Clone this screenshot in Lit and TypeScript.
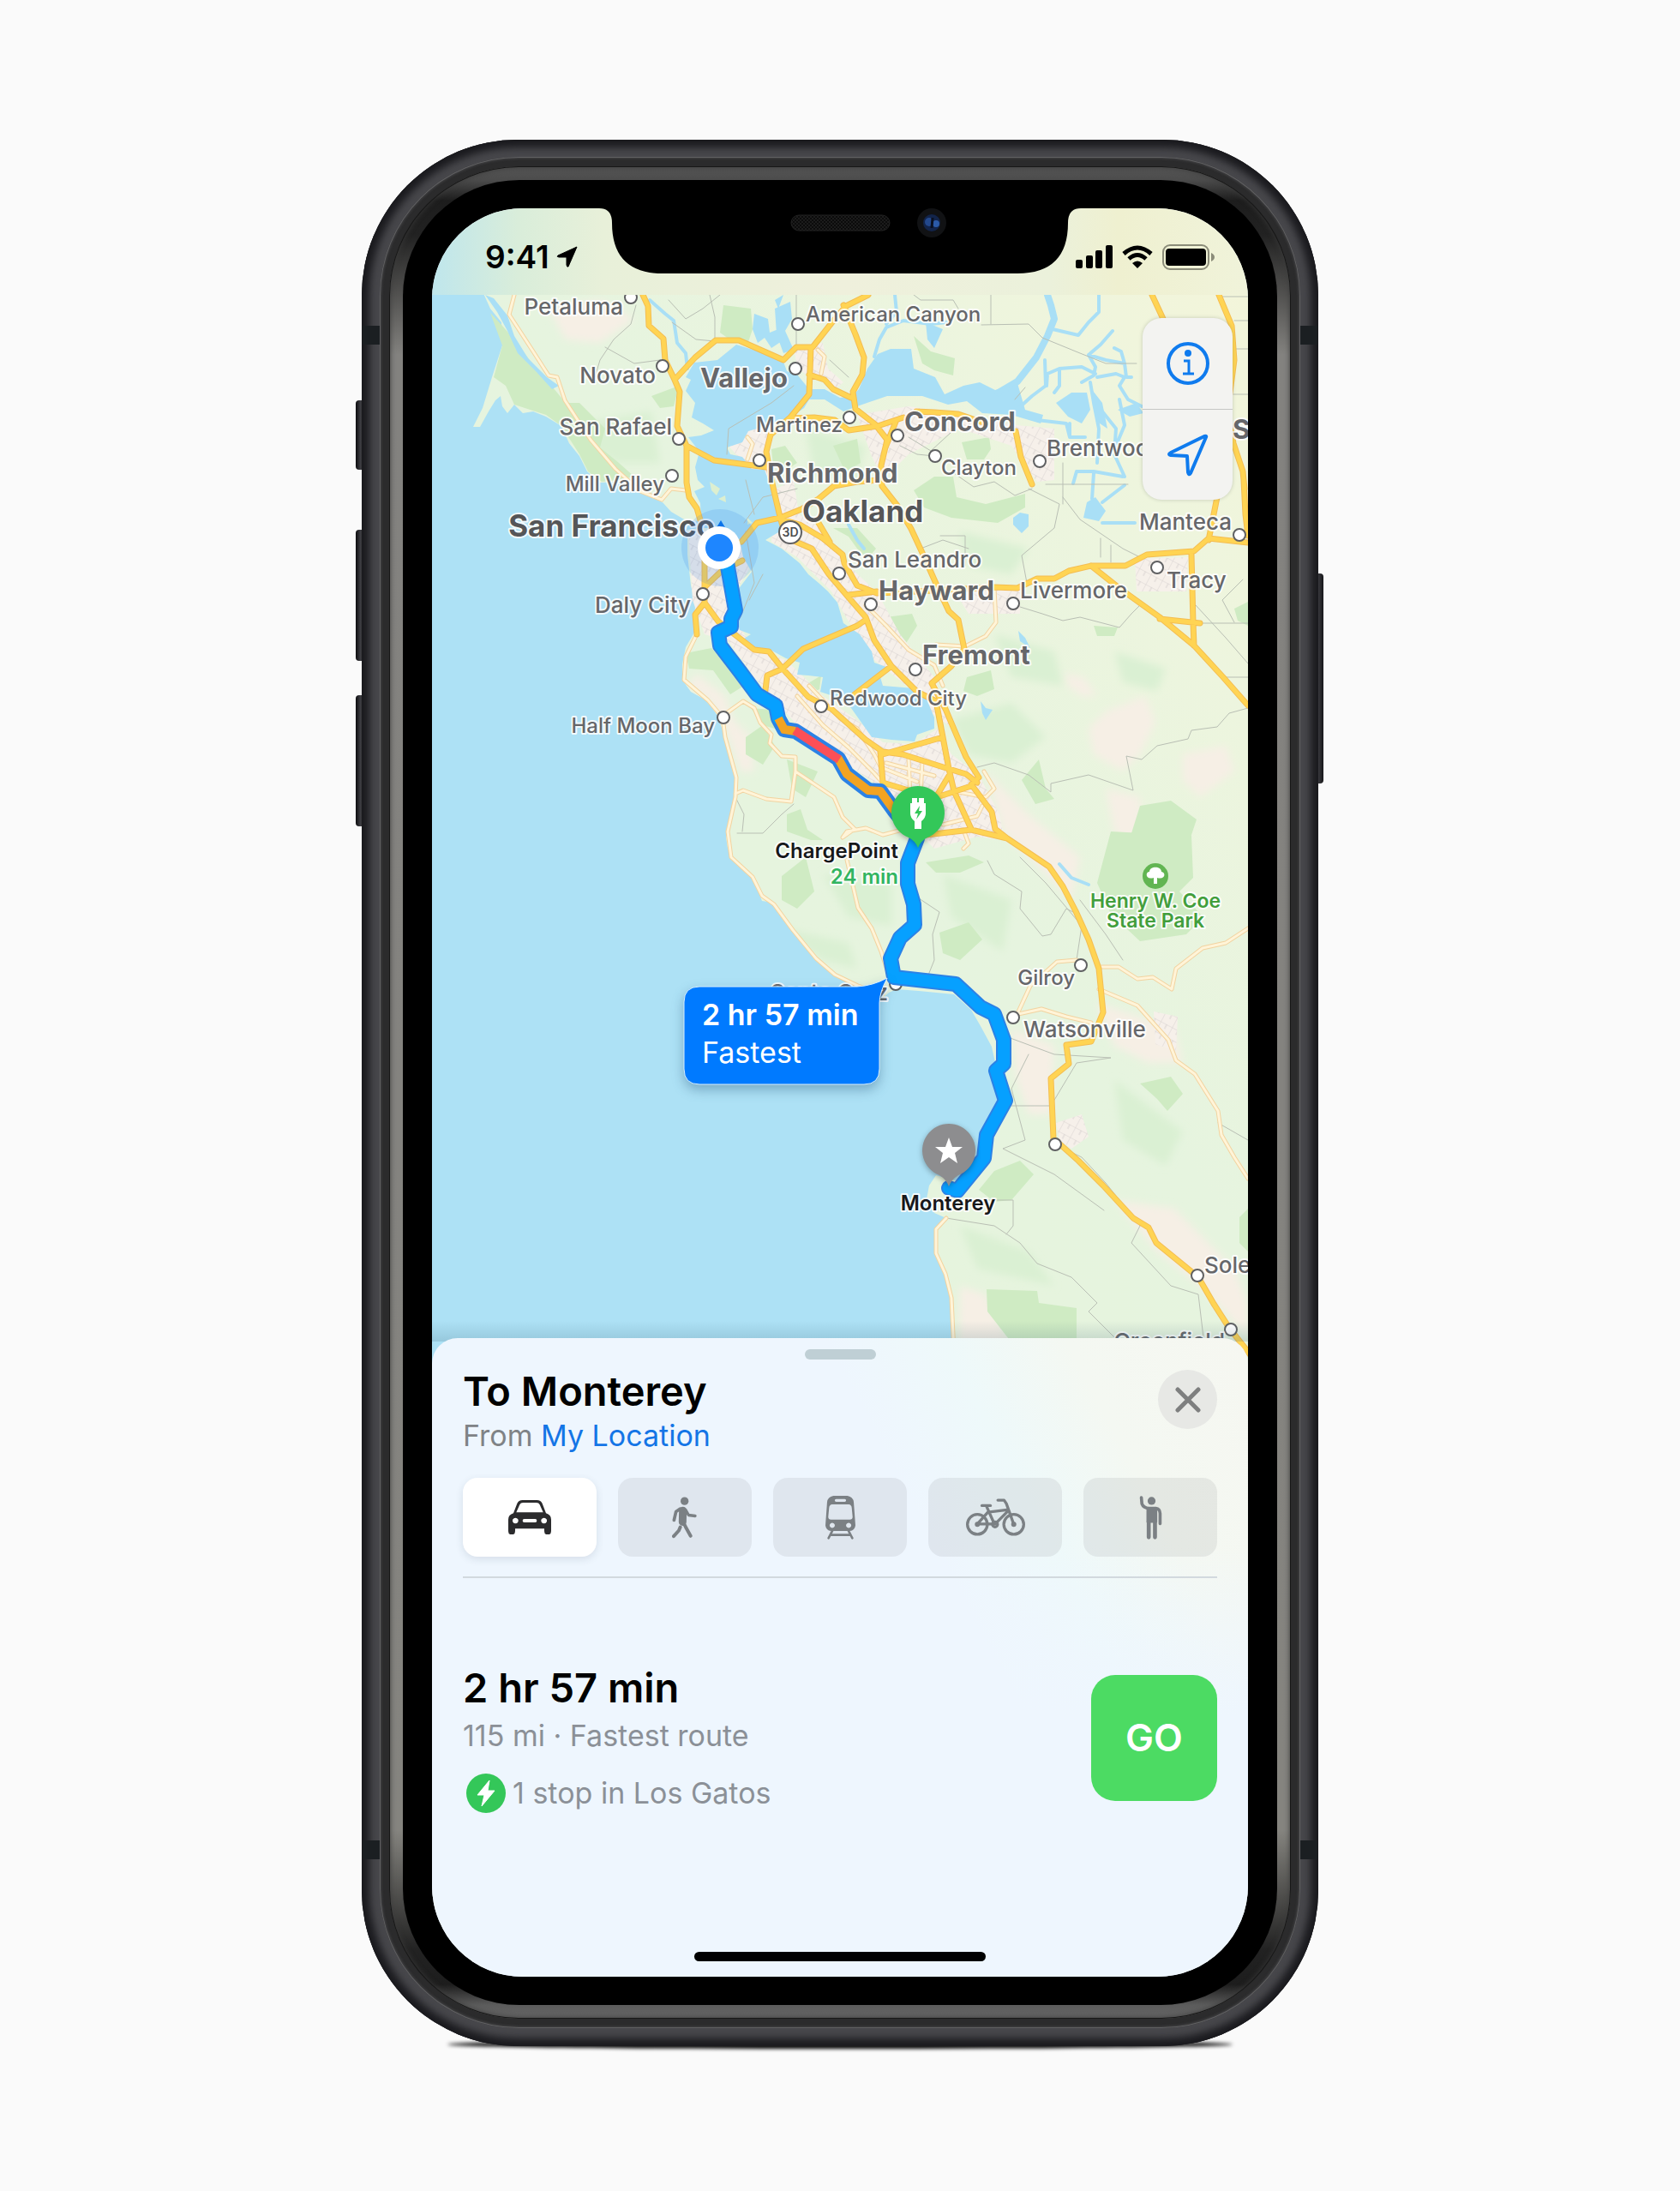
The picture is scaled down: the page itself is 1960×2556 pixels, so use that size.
import { LitElement, html, svg, css } from "lit";
import { customElement, state } from "lit/decorators.js";

type Place = {
  name: string;
  x: number;
  y: number;
  kind?: "village" | "town" | "major" | "metro";
  end?: boolean;
};

const PLACES: Place[] = [
  { name: "Petaluma", x: 727, y: 367, end: true, kind: "town" },
  { name: "American Canyon", x: 940, y: 375 },
  { name: "Novato", x: 765, y: 447, end: true, kind: "town" },
  { name: "Vallejo", x: 919, y: 452, kind: "major", end: true },
  { name: "San Rafael", x: 784, y: 507, end: true, kind: "town" },
  { name: "Martinez", x: 983, y: 504, end: true },
  { name: "Concord", x: 1055, y: 503, kind: "major" },
  { name: "Clayton", x: 1098, y: 554 },
  { name: "Brentwood", x: 1221, y: 532, kind: "town" },
  { name: "Richmond", x: 895, y: 563, kind: "major" },
  { name: "Mill Valley", x: 775, y: 573, end: true },
  { name: "San Francisco", x: 834, y: 626, kind: "metro", end: true },
  { name: "Oakland", x: 936, y: 609, kind: "metro" },
  { name: "Stockton", x: 1438, y: 512, kind: "major" },
  { name: "Manteca", x: 1437, y: 618, end: true, kind: "town" },
  { name: "San Leandro", x: 989, y: 662, kind: "town" },
  { name: "Hayward", x: 1025, y: 700, kind: "major" },
  { name: "Livermore", x: 1190, y: 698, kind: "town" },
  { name: "Tracy", x: 1361, y: 686, kind: "town" },
  { name: "Fremont", x: 1076, y: 775, kind: "major" },
  { name: "Redwood City", x: 968, y: 823 },
  { name: "Daly City", x: 806, y: 715, end: true, kind: "town" },
  { name: "Half Moon Bay", x: 834, y: 855, end: true },
  { name: "Gilroy", x: 1254, y: 1149, end: true },
  { name: "Watsonville", x: 1194, y: 1210, kind: "town" },
  { name: "Soledad", x: 1405, y: 1485, kind: "town" },
  { name: "Greenfield", x: 1429, y: 1574, end: true, kind: "town" },
  { name: "Santa Cruz", x: 1036, y: 1167, end: true, kind: "town" },
];

const DOTS: [number, number][] = [
  [736, 347], [931, 378], [773, 427], [928, 430], [792, 512], [991, 487],
  [1047, 508], [1091, 532], [1213, 538], [886, 537], [784, 555], [1446, 624],
  [979, 669], [1016, 705], [1182, 704], [1350, 662], [1068, 781], [958, 824],
  [820, 693], [844, 837], [1261, 1126], [1182, 1187], [1231, 1335],
  [1397, 1488], [1436, 1551], [1045, 1148],
];

const COAST =
  "M563 340 L572 360 585 376 586 403 574 440 563 476 552 498 560 498 570 480 578 467 584 462 586 474 592 482 600 472 610 482 622 480 637 486 655 497 664 517 676 532 685 550 700 563 722 562 735 572 747 575 773 586 783 597 800 607 818 608 818 616 802 618 802 647 806 683 811 705 810 738 800 755 796 775 796 793 806 807 826 818 837 835 846 860 852 885 859 907 858 937 852 960 847 977 849 990 860 1007 878 1023 889 1051 903 1053 925 1083 952 1118 974 1136 1001 1150 1028 1166 1037 1158 1046 1154 1072 1156 1113 1160 1133 1178 1144 1197 1157 1221 1164 1253 1173 1284 1162 1308 1148 1336 1140 1352 1117 1378 1092 1371 1084 1383 1081 1399 1090 1415 1104 1421 1092 1434 1092 1462 1103 1486 1110 1514 1113 1600 L1470 1600 1470 340Z";

const BAY =
  "M818 608 L817 587 810 573 822 568 814 560 811 545 816 527 803 510 818 508 833 502 820 494 807 487 811 470 800 456 806 443 800 440 810 423 837 420 859 402 885 410 914 422 918 433 930 437 944 454 962 454 980 464 994 462 1002 454 1012 430 1024 413 1039 407 1063 407 1066 430 1091 440 1102 460 1124 450 1143 446 1161 455 1187 447 1196 478 1217 484 1214 494 1180 484 1146 482 1128 468 1106 472 1076 462 1035 462 1000 474 984 480 962 466 944 466 938 476 922 487 905 492 890 498 873 503 866 516 848 522 852 530 866 533 877 547 892 548 897 562 902 575 907 603 913 618 893 630 912 640 933 657 943 670 955 680 966 690 977 703 984 727 1003 740 1017 760 1020 773 1037 779 1027 790 1030 800 1067 803 1080 813 1090 837 1090 850 1070 857 1067 865 1040 863 1017 860 1010 850 993 826 975 813 957 807 960 790 943 788 930 787 933 773 917 768 897 757 880 757 868 745 876 740 863 735 857 715 864 708 857 693 867 680 877 667 867 650 863 630 850 616 818 616Z";

const WATER = [
  "M566 344 L576 348 592 368 600 392 616 418 638 440 652 450 644 454 626 434 604 412 592 386 580 364Z",
  "M880 366 L896 372 898 388 908 384 912 398 900 406 892 394 884 400 878 384Z",
  "M904 360 L922 352 924 372 916 386 926 408 914 412 906 390Z",
  "M904 350 L914 344 908 360Z",
  "M1232 470 L1250 458 1268 458 1272 478 1262 494 1246 486Z",
  "M1272 452 L1286 470 1292 500 1280 492Z",
  "M1304 478 L1326 470 1334 482 1318 486Z",
  "M1268 586 L1278 580 1290 596 1282 608 1264 604Z",
  "M1182 604 L1190 598 1200 600 1200 614 1192 622 1182 612Z",
  "M1144 818 L1150 826 1158 828 1150 840 1146 832Z",
  "M1188 736 L1196 744 1202 756 1190 748Z",
  "M1080 376 L1100 384 1090 406 1082 396Z",
];

const RIVERS = [
  "M1165 458 L1187 445 1209 417 1222 392 1230 372 1226 356 1222 344",
  "M1228 384 L1258 391 1270 376 1282 364 1282 344",
  "M1020 416 L1026 396 1034 382 1054 374 1086 378 1104 376",
  "M1044 344 L1046 364 1034 378",
  "M758 350 L776 366 786 374 790 400 800 412 802 430",
  "M1182 482 L1204 462 1220 450 1219 420",
  "M1221 450 L1222 436 1236 430 1262 428 1278 436",
  "M1236 432 L1236 450 1230 458",
  "M1262 446 L1276 438 1278 428 1270 414 1284 402 1298 386",
  "M1270 414 L1290 420 1312 424 1314 440 1320 440",
  "M1312 424 L1308 410 1300 406",
  "M1280 440 L1302 436 1312 440 1306 450 1316 466 1332 474",
  "M1272 446 L1276 470 1282 500 1280 540",
  "M1210 490 L1244 494 1248 510 1266 510",
  "M1248 494 L1248 510",
  "M1286 480 L1302 500 1300 530 1312 556",
  "M1306 466 L1312 496 1302 520",
  "M1252 564 L1256 550 1276 550 1310 556",
  "M1312 566 L1286 586 M1276 552 L1274 582",
  "M1286 610 L1324 610",
  "M990 612 L1000 630 1008 640",
  "M1236 1008 L1250 1024 1270 1032",
];

const PARKS = [
  "M572 365 L586 380 600 396 618 420 640 446 660 470 676 470 706 500 700 522 722 540 740 556 720 560 702 562 686 550 676 530 655 497 637 484 600 472 590 450 576 440 586 403Z",
  "M844 356 L876 360 878 384 872 402 854 398 840 388Z",
  "M760 462 L792 450 786 474 770 476Z",
  "M1066 392 L1086 410 1114 418 1112 438 1090 432 1076 424Z",
  "M1066 572 L1090 556 1112 556 1116 580 1150 588 1196 576 1196 592 1164 610 1110 604 1078 592Z",
  "M1122 516 L1154 510 1156 524 1148 536 1128 536Z",
  "M972 520 L1000 512 1004 540 986 550Z",
  "M900 524 L916 520 930 540 918 548 902 542Z",
  "M972 616 L1000 616 1022 640 1012 652 1000 640 990 626Z",
  "M1012 712 L1034 720 1064 716 1070 730 1056 752 1040 738Z",
  "M800 762 L830 756 850 778 868 800 852 810 832 782 804 780Z",
  "M1128 790 L1156 782 1160 804 1140 812 1124 806Z",
  "M870 860 L890 846 904 870 890 892 870 880Z",
  "M876 826 L900 828 904 850 890 846Z",
  "M918 886 L954 900 940 930 924 920Z",
  "M918 950 L934 944 942 968 960 980 946 980 918 970Z",
  "M1192 910 L1212 886 1220 920 1230 932 1208 938Z",
  "M1330 940 L1366 934 1396 956 1388 980 1350 990 1320 972Z",
  "M1296 970 L1390 975 1392 1024 1376 1040 1404 1070 1384 1090 1330 1098 1296 1066 1280 1030Z",
  "M912 1022 L940 1000 950 1040 930 1060 912 1050Z",
  "M1096 1088 L1130 1076 1146 1096 1120 1120 1100 1112Z",
  "M1080 1006 L1130 998 1148 1006 1120 1018 1092 1018Z",
  "M1330 1264 L1366 1256 1380 1276 1362 1296 1350 1282Z",
  "M1160 1366 L1190 1354 1206 1370 1180 1400 1160 1402 1142 1388Z",
  "M1151 1504 L1210 1506 1212 1520 1256 1526 1256 1600 1180 1600 1180 1566 1152 1530Z",
  "M1446 1420 L1456 1410 1456 1460 1446 1450Z",
  "M938 800 L958 788 956 804 944 810Z",
  "M830 688 L842 684 846 704 834 700Z",
  "M1276 730 L1304 732 1300 742 1280 742Z",
  "M1440 710 L1456 702 1456 730 1444 724Z",
];

const SAND = [
  "M640 360 L700 350 740 372 700 400 660 396Z",
  "M1240 785 L1264 790 1280 812 1262 812 1246 800Z",
  "M1290 830 L1336 812 1348 842 1330 880 1310 900 1276 880 1270 850Z",
  "M1290 920 L1330 930 1332 970 1320 990 1300 970Z",
  "M1150 900 L1200 950 1260 1000 1250 1050 1200 1000 1170 970Z",
  "M812 786 L846 812 856 840 876 860 880 900 864 900 846 850 830 820 802 800Z",
  "M1180 1200 L1230 1220 1226 1300 1200 1300 1186 1260Z",
  "M1280 1170 L1370 1200 1380 1240 1340 1240 1300 1220Z",
  "M1300 1400 L1370 1410 1440 1480 1456 1520 1456 1560 1400 1500 1350 1460Z",
  "M1120 1500 L1150 1510 1180 1570 1150 1600 1118 1600Z",
  "M1380 880 L1430 870 1440 900 1400 930 1380 910Z",
];

const MEADOW = [
  "M1110 840 L1180 820 1220 860 1180 890 1130 880Z",
  "M1160 740 L1230 760 1240 800 1180 790Z",
  "M1300 760 L1360 780 1350 806 1310 796Z",
  "M900 1080 L990 1100 1000 1130 960 1120Z",
  "M960 1020 L1040 1030 1040 1080 990 1070Z",
  "M1100 1020 L1180 1050 1170 1110 1110 1070Z",
  "M1300 1260 L1380 1320 1360 1360 1310 1330Z",
  "M1120 1430 L1200 1460 1230 1500 1140 1480Z",
  "M940 500 L1010 520 1000 560 950 556Z",
  "M640 500 L760 480 770 540 720 540Z",
  "M1120 620 L1200 640 1180 670 1130 660Z",
];

const URBAN = [
  "M803 620 L850 617 866 640 874 664 858 690 862 730 880 757 917 770 940 792 960 812 1000 840 1030 866 1066 868 1094 850 1110 880 1142 904 1166 950 1172 980 1140 976 1090 990 1060 960 1030 920 980 886 930 846 880 790 850 748 822 740 808 700Z",
  "M906 570 L926 560 932 600 960 618 990 660 1024 692 1050 740 1090 790 1112 850 1084 830 1060 802 1020 770 990 725 970 690 930 650 900 632Z",
  "M1000 484 L1060 474 1110 482 1186 496 1230 500 1230 560 1210 562 1180 520 1120 500 1060 530 1030 560 1016 530Z",
  "M850 520 L876 500 896 500 900 560 872 546Z",
  "M926 404 L960 400 966 430 984 446 976 452 946 440 930 430Z",
  "M1140 686 L1190 684 1190 716 1130 716 1120 700Z",
  "M1324 652 L1386 650 1384 690 1326 690Z",
  "M1232 1310 L1262 1300 1270 1326 1250 1340 1236 1330Z",
  "M1346 1180 L1374 1186 1372 1226 1348 1218Z",
];

const HIGHWAYS = [
  "M750 344 L756 357 757 380 774 395 776 420 787 443 793 457 790 497 801 520 801 563 804 580 813 593 818 610",
  "M787 443 L811 417 835 397 862 397 914 420 929 405 948 405 970 377 987 357 1013 344",
  "M946 405 L944 460 922 487 899 507 894 527 898 550 903 573 910 603",
  "M801 520 L833 537 894 545",
  "M944 437 L962 443 972 454 993 464",
  "M984 356 L998 390 1008 417 1006 437 995 457 998 477 1021 495 1035 513 1028 543 1029 567 1047 590 1063 617 1077 647 1093 683 1107 713 1118 723 1125 757 1110 777 1087 797 1103 827 1117 860 1127 883 1142 907 1133 915 1157 947 1161 967 1175 978",
  "M922 488 L950 487 974 490 990 502 1024 497 1054 487",
  "M1045 492 L1033 522",
  "M1069 480 L1090 481 1118 483 1150 494",
  "M1185 503 L1191 533 1204 565",
  "M865 632 L883 610 910 604 935 594 955 582 973 567 1000 562 1026 560",
  "M910 603 L917 627 947 640 967 670 990 697 1010 720 1020 747 1040 777 1070 807 1092 818 1100 860 1107 897 1113 923 1133 967",
  "M912 606 L933 612 960 628 983 647 985 657 1000 683 1023 692 1070 690 1160 685 1187 686 1210 675 1230 675 1247 666 1273 660 1313 660 1338 647 1393 643 1410 628 1456 633",
  "M955 610 L968 632",
  "M990 694 L1023 690",
  "M893 805 L895 788 913 780 937 757 1000 730 1010 723",
  "M997 810 L1040 777",
  "M1273 660 L1307 687 1353 720 1393 753 1427 790 1456 823",
  "M1390 647 L1392 727 1393 753",
  "M1353 722 L1400 727",
  "M1420 580 L1410 630",
  "M1451 560 L1453 600 1456 625",
  "M1344 344 L1357 372 1370 410",
  "M1422 344 L1437 380 1440 420 1432 480 1439 517 1450 550 1452 570",
  "M822 703 L838 725 857 740 880 758 897 760 913 780 943 813 970 827 1010 863 1030 877 1053 880 1107 897 1127 903 1140 913",
  "M813 740 L811 717 822 703 822 650",
  "M822 685 L843 665 866 654",
  "M1027 877 L1030 913 1060 922 1093 930 1133 917",
  "M1030 880 L1100 860",
  "M1093 928 L1107 905",
  "M1080 974 L1133 968 1175 978 1224 1011 1240 1034 1255 1063 1270 1096 1282 1130 1287 1181 1273 1215 1244 1219 1247 1241 1226 1258 1229 1328 1258 1354 1287 1383 1322 1421 1340 1432 1349 1450 1398 1490 1416 1521 1434 1549 1456 1577 1468 1594",
];

const ROADS = [
  "M600 344 L594 367 622 410 640 438 650 440 659 467 689 513 718 547 747 573 772 583 783 570 800 572",
  "M813 740 L800 766 798 793 826 817 843 837 846 860 859 907 858 930 849 970 853 1000 878 1023 889 1045 903 1055 925 1085 952 1118 974 1137 1001 1150 1030 1160",
  "M846 833 L867 818 880 826 887 843 900 857 898 867 912 882 928 883 928 900 923 935 894 932 867 922 858 926",
  "M928 900 L973 930 983 953 997 967 983 977 988 970 1010 966 1030 974 1060 966",
  "M988 1003 L1001 1059 1017 1083 1028 1110 1037 1138",
  "M944 800 L980 838 1000 850 1020 880 1030 900",
  "M930 812 L960 846 990 872 1020 902 1034 918",
  "M1034 890 L1090 905 M1030 896 L1070 912 M1060 884 L1062 930 M1076 888 L1074 930",
  "M1010 706 L1034 730 1060 758 1090 776 1100 800",
  "M1160 686 L1162 726 1150 742 1126 754 1092 752",
  "M1113 923 L1150 930 1160 920 1148 900",
  "M1124 968 L1130 984 1124 990 M1100 962 L1140 952 1146 940",
  "M1184 1189 L1202 1150 1233 1122 1256 1120",
  "M1188 1183 L1215 1177 1244 1186 1273 1193",
  "M1282 1128 L1305 1128 1327 1142 1345 1140 1367 1154 1372 1130 1403 1106 1430 1100 1456 1083",
  "M1282 1154 L1327 1173 1363 1213 1372 1237 1394 1253 1421 1296 1425 1324 1440 1350 1456 1375",
  "M1104 1421 L1092 1434 1092 1462 1103 1486 1110 1514 1114 1600",
  "M872 510 L878 518 872 536",
  "M954 408 L962 416 958 436",
];

const BOUNDS = [
  "M742 356 L736 378 716 396 700 420 694 440",
  "M706 405 L740 424 770 420",
  "M780 350 L800 372 820 360 840 344",
  "M784 376 L812 396 834 398",
  "M828 344 L834 370 834 394",
  "M1156 344 V378 M1066 344 L1074 350 1112 350 1118 360",
  "M1145 379 L1200 378 1216 394 1260 412 1290 424 1326 424",
  "M1425 346 H1456 M1439 407 H1456 M1439 460 H1456 M1440 374 H1456",
  "M929 344 V370 M929 386 V404",
  "M848 530 L850 500 900 470 926 450",
  "M968 420 L990 440 M1184 466 L1196 452",
  "M1110 550 L1136 568 1160 562 1184 578 1204 570",
  "M1200 570 L1236 588 1230 616 1192 648 1198 680",
  "M1220 565 H1316 M1240 540 V588",
  "M1240 580 L1260 606 1310 640 1330 650",
  "M1284 628 V650 M1296 636 V656",
  "M1190 708 L1216 716 1240 724 1260 720 1306 732 1320 716 1330 706",
  "M1395 706 L1430 744 1456 774",
  "M1450 676 L1426 700 1440 726 M1400 727 H1456 M1427 790 H1456",
  "M1140 895 L1160 890 1200 904 1226 924 1226 914 1270 904 1322 922 1314 882 1332 886 1350 870 1386 862 1390 852 1420 848 1434 832 1456 826",
  "M1074 640 L1100 630 1130 640 M1097 625 H1126 V660",
  "M858 930 L868 950 866 970 M860 972 L890 972 912 950 926 938",
  "M1152 1004 L1160 1020 1192 1040 1190 1060 1216 1092 1226 1090 1244 1060 1256 1066",
  "M1060 1040 L1096 1064 1088 1090 1090 1120 1082 1140",
  "M1256 1120 L1262 1080 1220 1030 1190 1000",
  "M1310 1120 L1290 1090 1260 1050",
  "M1176 1210 L1230 1230 1296 1234 1256 1240 1226 1290 1180 1290",
  "M1200 1230 L1180 1270 1196 1330 1170 1340 1230 1370 1288 1412",
  "M1104 1421 L1160 1430 1190 1450 1210 1474 1250 1490 1280 1520 1270 1530 1300 1560",
  "M1152 1400 L1182 1400 1182 1430 1174 1440",
  "M1231 1335 L1262 1350 1290 1380 1330 1430 1320 1450 1366 1500 1398 1510 1404 1560",
  "M1421 1310 L1456 1330",
  "M870 560 L880 600 M868 610 L890 580 930 570",
  "M874 700 L890 670 M870 620 L880 680 864 720",
  "M1050 520 L1070 530 1090 532 M1060 510 L1086 526 1110 504",
];

const ROUTE_A = "M847 650 L858 712 853 722 853 731 838 738 840 753 863 783 883 810 905 823 908 838";
const ROUTE_TRAFFIC = "M908 838 L915 851 928 853 978 885 988 903 1013 922 1027 923 1043 945 1060 966";
const ROUTE_B =
  "M1070 978 L1059 1007 1059 1031 1066 1055 1067 1079 1050 1094 1039 1118 1043 1140 1115 1148 1144 1175 1160 1183 1171 1213 1171 1241 1162 1249 1173 1284 1151 1324 1148 1351 1117 1389 1107 1386";

@customElement("route-map")
class RouteMap extends LitElement {
  static styles = css`
    :host {
      display: block;
    }
    .map {
      display: block;
      width: 100%;
      height: auto;
      font-family: Inter, "Liberation Sans", sans-serif;
    }
    .line {
      fill: none;
      stroke-linejoin: round;
      stroke-linecap: round;
    }
    .label {
      fill: #66676a;
      stroke: rgba(255, 255, 255, 0.85);
      stroke-width: 4px;
      stroke-linejoin: round;
      paint-order: stroke;
      font-size: 24px;
      font-weight: 500;
    }
    .town {
      font-size: 26px;
    }
    .major {
      font-size: 31px;
      font-weight: 700;
    }
    .metro {
      font-size: 35px;
      font-weight: 700;
      fill: #555658;
    }
    .stop {
      fill: #17181a;
      font-weight: 600;
    }
    .wait {
      fill: #32b561;
      font-weight: 600;
    }
    .park {
      fill: #429e3c;
      font-weight: 600;
    }
    .park-name {
      font-size: 23px;
    }
    .badge {
      font-size: 14px;
      font-weight: 600;
      fill: #4c4d50;
    }
    .bubble {
      filter: drop-shadow(0 6px 7px rgba(20, 70, 110, 0.35));
    }
    .pin {
      filter: drop-shadow(0 2px 3px rgba(0, 0, 0, 0.3));
    }
    .eta {
      fill: #fff;
      font-size: 34px;
      font-weight: 600;
    }
    .eta-note {
      fill: #fff;
      font-size: 34px;
      font-weight: 400;
    }
  `;

  private lines(paths: string[], color: string, width: number) {
    return svg`<path class="line" d=${paths.join(" ")} stroke=${color} stroke-width=${width} />`;
  }

  render() {
    return html`
      <svg class="map" viewBox="504 344 952 1247" role="img" aria-label="Route from San Francisco to Monterey">
        <defs>
          <linearGradient id="land" x1="0" y1="1" x2="1" y2="0">
            <stop offset="0" stop-color="#e6f4db" />
            <stop offset="0.55" stop-color="#e6f4df" />
            <stop offset="0.8" stop-color="#edf5de" />
            <stop offset="1" stop-color="#f3f5da" />
          </linearGradient>
          <clipPath id="shore"><path d=${COAST} /></clipPath>
          <filter id="soften" x="-5%" y="-5%" width="110%" height="110%">
            <feGaussianBlur stdDeviation="5" />
          </filter>
          <pattern id="streets" width="15" height="13" patternUnits="userSpaceOnUse" patternTransform="rotate(28)">
            <path d="M0 0 H15 M0 0 V13 M8 0 V6" fill="none" stroke="#d9d3d1" stroke-width="1" />
          </pattern>
          <linearGradient id="lift" x1="0" y1="0" x2="0" y2="1">
            <stop offset="0" stop-color="#3c6478" stop-opacity="0" />
            <stop offset="1" stop-color="#3c6478" stop-opacity="0.2" />
          </linearGradient>
        </defs>
        <rect x="504" y="344" width="952" height="1250" fill="#ade1f5" />
        <path d=${COAST} fill="url(#land)" />
        <g clip-path="url(#shore)">
          <path d=${SAND.join(" ")} fill="#f6efe5" filter="url(#soften)" />
          <path d=${MEADOW.join(" ")} fill="#daf0d3" filter="url(#soften)" />
        </g>
        <path d=${PARKS.join(" ")} fill="#cfebc3" />
        <path d=${URBAN.join(" ")} fill="#f6f0ea" />
        <path d=${URBAN.join(" ")} fill="url(#streets)" />
        <path d=${BAY} fill="#a9dff6" />
        <path d="M828 562 L840 570 836 578 830 572Z M838 582 L846 578 847 586Z M872 604 L878 610 872 612Z" fill="#dcefd0" />
        <path d=${WATER.join(" ")} fill="#a9dff6" />
        ${this.lines(RIVERS.slice(0, 1), "#a9dff6", 8)} ${this.lines(RIVERS, "#a9dff6", 4)}
        ${this.lines(BOUNDS, "#b9bfb4", 1)}
        ${this.lines(ROADS, "#f2d3a0", 5)} ${this.lines(ROADS, "#fff4d8", 3)}
        ${this.lines(HIGHWAYS, "#f4bd52", 7)} ${this.lines(HIGHWAYS, "#ffd453", 5)}

        ${DOTS.map(
          ([x, y]) => svg`<circle cx=${x} cy=${y} r="7" fill="#fff" stroke="#5f6062" stroke-width="2" />`,
        )}
        <circle cx="922" cy="621" r="13" fill="#fff" stroke="#5f6062" stroke-width="2" />
        <text class="badge" x="922" y="626" text-anchor="middle">3D</text>

        ${PLACES.map(
          (p) => svg`<text class="label ${p.kind ?? "village"}" x=${p.x} y=${p.y}
            text-anchor=${p.end ? "end" : "start"}>${p.name}</text>`,
        )}
        <circle cx="1348" cy="1022" r="15" fill="#62b552" />
        <path d="M1346 1031 V1024 C1336 1027 1336 1017 1341 1017 C1341 1010 1355 1010 1355 1017 C1361 1018 1359 1027 1350 1024 V1031Z" fill="#fff" />
        <text class="label park park-name" x="1348" y="1059" text-anchor="middle">Henry W. Coe</text>
        <text class="label park park-name" x="1348" y="1082" text-anchor="middle">State Park</text>

        <circle cx="840" cy="639" r="45" fill="#2a7fe6" opacity="0.16" />
        ${this.lines([ROUTE_A, ROUTE_TRAFFIC, ROUTE_B], "#2b82e6", 18)}
        ${this.lines([ROUTE_A, ROUTE_B], "#06a0ff", 14)}
        <path d="M908 838 L915 851 928 853" stroke="#f3a322" stroke-width="10" fill="none" />
        <path class="line" d="M978 885 L988 903 1013 922 1027 923 1043 945 1060 966" stroke="#f3a322" stroke-width="10" />
        <path d="M927 852 L979 886" stroke="#fc4f57" stroke-width="10" fill="none" />

        <path d="M841 607 L850 622 H832Z" fill="#0a73ea" />
        <circle cx="839" cy="639" r="25" fill="#fff" />
        <circle cx="839" cy="639" r="16" fill="#1e86ff" />

        <path class="pin" d="M1060 977 A31 31 0 1 1 1082 977 Q1074 981 1071 989 Q1068 981 1060 977Z" fill="#33c759" />
        <path d="M1064 931 h6 v5 h2 v-5 h6 v6 h2 v12 q0 5 -5 9 v9 h-8 v-9 q-5 -4 -5 -9 v-12 h2z" fill="#fff" />
        <path d="M1073 940 l-6 9 h4 l-2 7 7 -10 h-4z" fill="#33c759" />

        <path class="pin" d="M1096 1371 A31 31 0 1 1 1118 1371 Q1110 1376 1107 1384 Q1104 1376 1096 1371Z" fill="#8d8d8f" />
        <path d="M1107 1327 l4 11 h12 l-9 7 3 12 -10 -7 -10 7 3 -12 -9 -7 h12z" fill="#fff" />
        <text class="label stop" x="1106" y="1412" text-anchor="middle">Monterey</text>
        <text class="label stop" x="1048" y="1001" text-anchor="end">ChargePoint</text>
        <text class="label wait" x="1048" y="1031" text-anchor="end">24 min</text>

        <path class="bubble" stroke="#d9efff" stroke-width="1"
          d="M816 1151 H1000 Q1018 1150 1035 1141 Q1026 1158 1026 1170 V1247 Q1026 1265 1008 1265 H816 Q798 1265 798 1247 V1169 Q798 1151 816 1151Z" fill="#007aff" />
        <text class="eta" x="819" y="1196">2 hr 57 min</text>
        <text class="eta-note" x="819" y="1240">Fastest</text>
        <rect x="504" y="1541" width="952" height="24" fill="url(#lift)" />
      </svg>
    `;
  }
}

const ICONS = {
  drive: svg`<svg class="icon" viewBox="0 0 150 120" width="50" height="40">
    <path fill-rule="evenodd" fill="currentColor" d="M18 46 L31 12 Q36 0 50 0 H100 Q114 0 119 12 L132 46 Q150 52 150 68 V109 a11 11 0 0 1 -24 0 V100 H24 V109 a11 11 0 0 1 -24 0 V68 Q0 52 18 46Z M28 43 H122 L110 16 Q107 9 98 9 H52 Q43 9 40 16Z M25 62 a10 10 0 1 0 .1 0Z M125 62 a10 10 0 1 0 .1 0Z M56 66 a6 6 0 0 0 0 12 h38 a6 6 0 0 0 0 -12Z" />
  </svg>`,
  walk: svg`<svg class="icon" viewBox="0 0 90 146" width="30" height="49">
    <g fill="none" stroke="currentColor" stroke-linecap="round" stroke-linejoin="round">
      <circle cx="44" cy="15" r="14" fill="currentColor" stroke="none" />
      <path d="M38 48 L37 88" stroke-width="27" />
      <path d="M28 42 L14 52 7 82" stroke-width="11" />
      <path d="M48 46 L58 64 L81 67" stroke-width="10" />
      <path d="M40 90 L50 110 65 137" stroke-width="12" />
      <path d="M29 106 L24 118 6 138" stroke-width="12" />
    </g>
  </svg>`,
  transit: svg`<svg class="icon" viewBox="0 0 106 154" width="35" height="51">
    <path fill-rule="evenodd" fill="currentColor" d="M28 0 H78 Q98 4 100 22 L106 104 Q104 122 86 124 H20 Q2 122 0 104 L6 22 Q8 4 28 0Z M38 11 a5 5 0 0 0 0 10 h30 a5 5 0 0 0 0 -10Z M24 30 Q14 31 13 42 L10 74 Q10 84 20 84 H86 Q96 84 96 74 L93 42 Q92 31 82 30Z M24 95 a9 9 0 1 0 .1 0Z M82 95 a9 9 0 1 0 .1 0Z" />
    <path fill="none" stroke="currentColor" stroke-width="8" stroke-linecap="round" d="M24 124 L11 149 M82 124 L95 149 M21 138 H85" />
  </svg>`,
  cycle: svg`<svg class="icon" viewBox="0 0 208 132" width="69" height="44">
    <g fill="none" stroke="currentColor" stroke-linecap="round" stroke-linejoin="round" stroke-width="10">
      <circle cx="40" cy="91" r="35" />
      <circle cx="168" cy="91" r="35" />
      <path d="M56 25 H86" />
      <path d="M112 6 H134 L142 18 168 91" />
      <path d="M72 27 L100 90 H40 L77 48 144 40 M148 44 L104 88" />
      <circle cx="102" cy="91" r="9" />
      <circle cx="40" cy="91" r="4" />
      <circle cx="168" cy="91" r="4" />
    </g>
  </svg>`,
  ride: svg`<svg class="icon" viewBox="0 0 80 154" width="27" height="51">
    <g fill="none" stroke="currentColor" stroke-linecap="round" stroke-linejoin="round">
      <circle cx="43" cy="18" r="14" fill="currentColor" stroke="none" />
      <path d="M7 6 L9 28 Q14 42 34 44 H58 Q72 46 73 62 V98" stroke-width="11" />
      <path d="M28 44 H60 V92 H28Z" fill="currentColor" stroke-width="6" />
      <path d="M33 90 V146 M55 90 V146" stroke-width="14" />
    </g>
  </svg>`,
};

const MODES = [
  { id: "drive", name: "Drive" },
  { id: "walk", name: "Walk" },
  { id: "transit", name: "Transit" },
  { id: "cycle", name: "Cycle" },
  { id: "ride", name: "Rideshare" },
] as const;

@customElement("app-root")
class AppRoot extends LitElement {
  @state() private mode: string = "drive";

  static styles = css`
    :host {
      display: block;
      min-height: 100vh;
      box-sizing: border-box;
      padding: 163px 24px 168px;
      background: #fafafa;
      font-family: Inter, "Liberation Sans", sans-serif;
      color: #000;
    }
    *,
    *::before,
    *::after {
      box-sizing: border-box;
    }
    button {
      font: inherit;
      border: 0;
      padding: 0;
      cursor: pointer;
    }
    .phone {
      position: relative;
      max-width: 1116px;
      margin: 0 auto;
    }
    .key {
      position: absolute;
      width: 12px;
      border-radius: 4px;
      background: linear-gradient(90deg, #0c0c0e, #3d3d42 45%, #151518);
    }
    .key-left {
      left: -7px;
    }
    .key-right {
      right: -6px;
    }
    .mute {
      top: 304px;
      height: 81px;
    }
    .volume-up {
      top: 455px;
      height: 153px;
    }
    .volume-down {
      top: 648px;
      height: 153px;
    }
    .power {
      top: 506px;
      height: 245px;
    }
    .antenna {
      position: absolute;
      width: 20px;
      height: 22px;
      background: #1b1f22;
    }
    .antenna-left {
      left: 1px;
    }
    .antenna-right {
      right: 1px;
    }
    .antenna-top {
      top: 217px;
    }
    .antenna-bottom {
      bottom: 218px;
    }
    .ground {
      position: absolute;
      left: 100px;
      right: 100px;
      bottom: -3px;
      height: 10px;
      border-radius: 50%;
      background: #000;
      filter: blur(2px);
    }
    .rim {
      position: relative;
      padding: 20px 21px 21px;
      border-radius: 182px;
      background: #47474b;
      box-shadow: inset 0 0 8px 9px #1b1b1f, inset 0 0 2px 1px #0b0b0d;
    }
    .band {
      padding: 11px;
      border-radius: 162px;
      background: #2b2b2c;
      box-shadow: inset 0 0 0 1px #606062, inset 0 0 3px 2px #434345;
    }
    .chamfer {
      padding: 16px;
      border-radius: 151px;
      background: linear-gradient(
        180deg,
        #555 0,
        #4c4c4c 16px,
        #1d1d1d 40px,
        #222 80px,
        #83827f 220px,
        #85847f calc(100% - 220px),
        #222 calc(100% - 80px),
        #1d1d1d calc(100% - 40px),
        #5c5c5c calc(100% - 16px),
        #666 100%
      );
      box-shadow: inset 0 0 0 1px #171717, inset 0 0 6px 1px #3a3a3a;
    }
    .glass {
      padding: 33px 34px;
      border-radius: 136px;
      background: #000;
    }
    .screen {
      position: relative;
      display: flex;
      flex-direction: column;
      border-radius: 106px;
      overflow: hidden;
      background: #eef6fe;
    }
    .status {
      display: flex;
      align-items: center;
      justify-content: space-between;
      height: 101px;
      padding: 12px 39px 0 62px;
      background: linear-gradient(90deg, #bfe6ec 0, #d9edda 100px, #e8f0d9 200px, #eff0dc 480px, #ebf1db 720px, #eff0d0 800px, #f0f3da);
    }
    .clock {
      display: flex;
      align-items: center;
      gap: 8px;
      font-size: 37px;
      line-height: 44px;
      font-weight: 600;
    }
    .signals {
      display: flex;
      align-items: center;
      gap: 11px;
    }
    .notch {
      position: absolute;
      top: -1px;
      left: 50%;
      width: 562px;
      margin-left: -281px;
      display: block;
    }
    .controls {
      position: absolute;
      top: 128px;
      right: 18px;
      width: 105px;
      display: flex;
      flex-direction: column;
      border-radius: 22px;
      overflow: hidden;
      background: #f3f3f1;
      box-shadow: 0 0 4px rgba(90, 100, 90, 0.3);
    }
    .control {
      display: grid;
      place-items: center;
      height: 106px;
      background: transparent;
      color: #0f7bee;
    }
    .control + .control {
      border-top: 1px solid #c6c7c5;
    }
    .sheet {
      position: relative;
      margin-top: -30px;
      padding: 13px 36px 18px;
      border-radius: 30px 30px 0 0;
      background: linear-gradient(62deg, rgba(238, 246, 254, 0) 58%, #eef9fa 70%, #f4f8f2 82%, #f6f7f1 100%) top / 100% 440px no-repeat, #eef6fe;
      display: flex;
      flex-direction: column;
    }
    .sheet::before {
      content: "";
      position: absolute;
      inset: 240px 0 auto;
      height: 200px;
      background: linear-gradient(180deg, rgba(238, 246, 254, 0), #eef6fe);
    }
    .sheet > * {
      position: relative;
    }
    .grabber {
      align-self: center;
      width: 83px;
      height: 12px;
      border-radius: 6px;
      background: #bfcfd5;
    }
    .head {
      display: flex;
      justify-content: space-between;
      align-items: flex-start;
      padding-top: 7px;
    }
    .title {
      margin: 0;
      font-size: 47px;
      line-height: 60px;
      font-weight: 600;
    }
    .from {
      margin: 0;
      font-size: 34px;
      line-height: 44px;
      color: #7f8386;
    }
    .from-link {
      color: #1475e6;
      text-decoration: none;
    }
    .close {
      display: grid;
      place-items: center;
      width: 69px;
      height: 69px;
      margin-top: 5px;
      border-radius: 50%;
      background: #e7e8e5;
      color: #7e7f7f;
    }
    .modes {
      display: grid;
      grid-template-columns: repeat(5, 1fr);
      gap: 25px;
      margin-top: 27px;
      padding-bottom: 23px;
      border-bottom: 2px solid #d2d9de;
    }
    .mode {
      display: grid;
      place-items: center;
      height: 92px;
      border-radius: 17px;
      background: rgba(120, 122, 128, 0.13);
      color: #7b8084;
    }
    .mode[aria-pressed="true"] {
      background: #fff;
      color: #2b2b2d;
      box-shadow: 0 3px 10px rgba(40, 60, 80, 0.12);
    }
    .icon {
      display: block;
    }
    .result {
      display: flex;
      justify-content: space-between;
      align-items: center;
      padding: 98px 0 162px;
    }
    .time {
      margin: 0 0 4px;
      font-size: 47px;
      line-height: 60px;
      font-weight: 600;
    }
    .detail {
      margin: 0;
      font-size: 34px;
      line-height: 44px;
      color: #8b9097;
    }
    .charge {
      display: flex;
      align-items: center;
      gap: 8px;
      margin-top: 22px;
      padding-left: 4px;
    }
    .go {
      width: 147px;
      height: 147px;
      border-radius: 28px;
      background: #4cdb63;
      color: #fff;
      font-size: 44px;
      line-height: 52px;
      font-weight: 600;
    }
    .home {
      align-self: center;
      width: 340px;
      height: 11px;
      border-radius: 6px;
      background: #000;
    }
  `;

  render() {
    return html`
      <main class="phone">
        <div class="ground"></div>
        <div class="key key-left mute"></div>
        <div class="key key-left volume-up"></div>
        <div class="key key-left volume-down"></div>
        <div class="key key-right power"></div>
        <div class="rim">
          <div class="antenna antenna-left antenna-top"></div>
          <div class="antenna antenna-right antenna-top"></div>
          <div class="antenna antenna-left antenna-bottom"></div>
          <div class="antenna antenna-right antenna-bottom"></div>
          <div class="band">
            <div class="chamfer">
              <div class="glass">
                <div class="screen">${this.renderStatus()} ${this.renderMap()} ${this.renderSheet()}</div>
              </div>
            </div>
          </div>
        </div>
      </main>
    `;
  }

  private renderStatus() {
    return html`
      <header class="status">
        <div class="clock">
          <span>9:41</span>
          <svg class="icon" viewBox="0 0 25 25" width="25" height="25">
            <path d="M24 1 L14 24 Q12.500 25 12 22 V13 H3 Q0 12.500 2 11Z" fill="#000" stroke="#000" stroke-linejoin="round" />
          </svg>
        </div>
        <div class="signals">
          <svg class="icon" viewBox="0 0 43 27" width="43" height="27">
            <rect x="0" y="17" width="8" height="10" rx="2" />
            <rect x="12" y="12" width="8" height="15" rx="2" />
            <rect x="23" y="6" width="8" height="21" rx="2" />
            <rect x="35" y="0" width="8" height="27" rx="2" />
          </svg>
          <svg class="icon" viewBox="0 0 36 27" width="36" height="27">
            <path d="M2 10 Q18 -4 34 10" fill="none" stroke="#000" stroke-width="5" />
            <path d="M8 16 Q18 7 28 16" fill="none" stroke="#000" stroke-width="5" />
            <path d="M18 27 L12 21 Q18 16 24 21Z" />
          </svg>
          <svg class="icon" viewBox="0 0 61 30" width="61" height="30">
            <rect x="1" y="1" width="53" height="28" rx="8" fill="none" stroke="#8b8c79" stroke-width="2" />
            <rect x="4" y="5" width="47" height="20" rx="4" />
            <path d="M57 10 Q61 12 61 15 Q61 18 57 20Z" fill="#8b8c79" />
          </svg>
        </div>
      </header>
      <svg class="notch" viewBox="0 0 562 78" aria-hidden="true">
        <defs>
          <pattern id="mesh" width="4" height="4" patternUnits="userSpaceOnUse">
            <rect width="4" height="4" fill="#0b0b0b" />
            <rect width="2" height="2" fill="#1c1c1c" />
            <rect x="2" y="2" width="2" height="2" fill="#1c1c1c" />
          </pattern>
        </defs>
        <path d="M0 0 V1 Q15 1 15 18 Q15 77 74 77 H488 Q547 77 547 18 Q547 1 562 1 V0Z" />
        <rect x="224" y="9" width="115" height="18" rx="9" fill="url(#mesh)" stroke="#222" stroke-width="1" />
        <circle cx="388" cy="18" r="17" fill="#111214" />
        <circle cx="388" cy="18" r="10" fill="#12244a" />
        <circle cx="385" cy="17" r="5" fill="#23488c" />
        <circle cx="393" cy="19" r="4" fill="#2b5aa8" />
        <path d="M389 12 L388 24" stroke="#0a1020" stroke-width="3" />
      </svg>
    `;
  }

  private renderMap() {
    return html`
      <route-map></route-map>
      <nav class="controls" aria-label="Map controls">
        <button class="control" aria-label="Map information">
          <svg class="icon" viewBox="0 0 52 52" width="52" height="52" fill="none" stroke="currentColor" stroke-width="4">
            <circle cx="26" cy="26" r="23" />
            <path d="M21 23 H27 V38 M20 38 H33" stroke-width="3" />
            <circle cx="26" cy="14" r="4" fill="currentColor" stroke="none" />
          </svg>
        </button>
        <button class="control" aria-label="Track location">
          <svg class="icon" viewBox="0 0 50 50" width="50" height="50">
            <path d="M46 4 L28 46 Q26 49 25 45 L24 26 5 25 Q1 24 5 22 L44 3 Q47 2 46 4Z" fill="none" stroke="currentColor" stroke-width="4" stroke-linejoin="round" />
          </svg>
        </button>
      </nav>
    `;
  }

  private renderSheet() {
    return html`
      <section class="sheet">
        <div class="grabber"></div>
        <div class="head">
          <div>
            <h1 class="title">To Monterey</h1>
            <p class="from">From <a class="from-link" href="#origin">My Location</a></p>
          </div>
          <button class="close" aria-label="Close">
            <svg class="icon" viewBox="0 0 30 30" width="30" height="30">
              <path d="M3 3 L27 27 M27 3 L3 27" fill="none" stroke="currentColor" stroke-width="5" stroke-linecap="round" />
            </svg>
          </button>
        </div>
        <div class="modes" role="group" aria-label="Travel mode">
          ${MODES.map(
            (m) => html`<button
              class="mode"
              aria-label=${m.name}
              aria-pressed=${this.mode === m.id ? "true" : "false"}
              @click=${() => (this.mode = m.id)}
            >
              ${ICONS[m.id]}
            </button>`,
          )}
        </div>
        <div class="result">
          <div>
            <h2 class="time">2 hr 57 min</h2>
            <p class="detail">115 mi · Fastest route</p>
            <p class="detail charge">
              <svg class="icon" viewBox="0 0 46 46" width="46" height="46">
                <circle cx="23" cy="23" r="23" fill="#34c759" />
                <path d="M27 8 L13 25 H21 L18 38 33 20 H25Z" fill="#fff" stroke="#fff" stroke-linejoin="round" />
              </svg>
              <span>1 stop in Los Gatos</span>
            </p>
          </div>
          <button class="go">GO</button>
        </div>
        <div class="home"></div>
      </section>
    `;
  }
}
